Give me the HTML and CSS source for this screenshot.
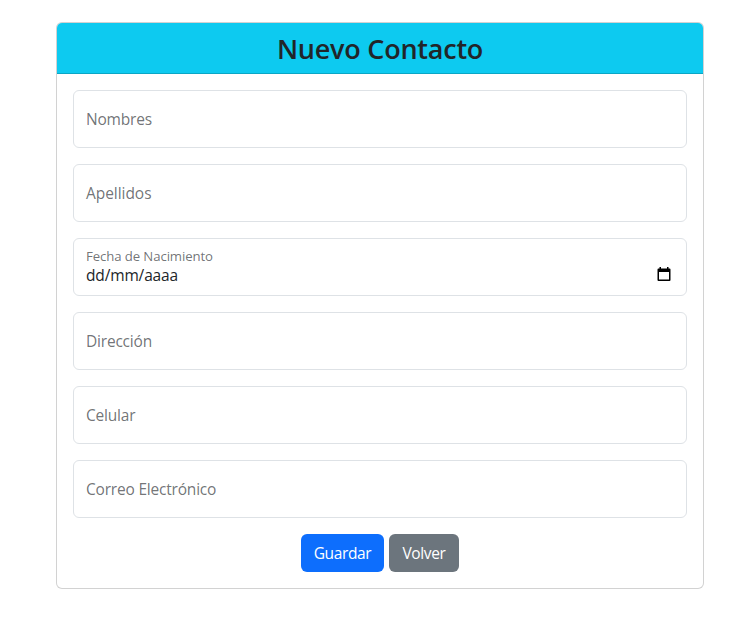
FILE: index.html
```html
<!DOCTYPE html>
<html lang="es">
<head>
<meta charset="utf-8">
<title>Nuevo Contacto</title>
<link rel="stylesheet" href="styles.css">
</head>
<body>
<main class="card">
  <header class="card-header"><h1>Nuevo Contacto</h1></header>
  <form class="card-body">
    <div class="field">Nombres</div>
    <div class="field field-apellidos">Apellidos</div>
    <div class="field field-date">
      <div class="date-text">
        <span class="label">Fecha de Nacimiento</span>
        <span class="value">dd/mm/aaaa</span>
      </div>
      <svg class="calendar" viewBox="0 0 14 15"><path d="M2.500 0H4v1.500h6V0h1.500v1.500h1Q13.500 1.500 13.500 2.500v10.500q0 1-1 1h-11q-1 0-1-1V2.500q0-1 1-1h1zM2 5v7.500h10V5z" fill-rule="evenodd"/></svg>
    </div>
    <div class="field">Dirección</div>
    <div class="field">Celular</div>
    <div class="field">Correo Electrónico</div>
    <div class="actions">
      <button type="button" class="btn primary">Guardar</button>
      <button type="button" class="btn secondary">Volver</button>
    </div>
  </form>
</main>
</body>
</html>
```
FILE: styles.css
```css
* { box-sizing: border-box; }
body { margin: 0; background: #fff; color: #212529; font-family: "Segoe UI", "Open Sans", "Noto Sans", sans-serif; font-size: 15.5px; line-height: 24px; }
.card { width: 648px; height: 567px; margin: 22px 0 0 56px; border: 1px solid rgba(0,0,0,.176); border-radius: 6px; background: #fff; }
.card-header { height: 51px; padding: 9px 16px 7px; background: #0dcaf0; border-bottom: 1px solid rgba(0,0,0,.176); border-radius: 5px 5px 0 0; text-align: center; }
h1 { margin: 0; font-size: 27px; font-weight: 600; line-height: 34px; letter-spacing: -.23px; }
.card-body { display: flex; flex-direction: column; gap: 16px; margin: 0; padding: 16px; }
.field { display: flex; align-items: center; height: 58px; padding: 0 12px; border: 1px solid #dee2e6; border-radius: 6px; color: rgba(33,37,41,.65); letter-spacing: -.2px; white-space: nowrap; }
.field-apellidos { letter-spacing: -.05px; }
.field-date { justify-content: space-between; padding-right: 15px; }
.date-text { display: flex; flex-direction: column; align-items: flex-start; padding-bottom: 2px; }
.label { font-size: 13.200px; line-height: 18px; letter-spacing: -.1px; }
.value { color: #212529; line-height: 20px; letter-spacing: -.15px; }
.calendar { width: 14px; height: 15px; margin-top: 15px; fill: #000; }
.actions { display: flex; justify-content: center; gap: 5px; }
.btn { height: 38px; padding: 0; border: 0; border-radius: 6px; color: #fff; font: inherit; letter-spacing: -.35px; }
.primary { width: 83px; background: #0d6efd; }
.secondary { width: 70px; background: #6c757d; }
```
